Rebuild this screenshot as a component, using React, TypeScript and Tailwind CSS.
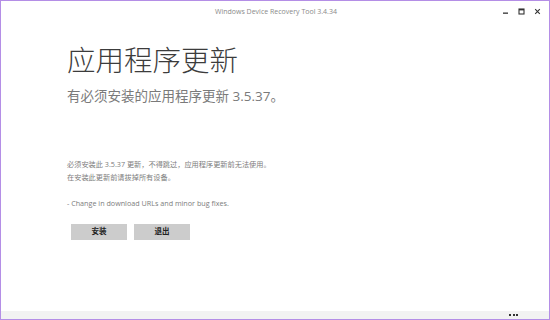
export default function App() {
  const cjk = { fontFamily: '"Open Sans", "Noto Sans CJK SC", sans-serif' };

  return (
    <div
      className="w-[550px] h-[320px] bg-white border border-[#b48ee6] flex flex-col overflow-hidden"
      style={cjk}
    >
      {/* title bar */}
      <div className="h-[22px] flex items-center relative">
        <div className="flex-1 text-center text-[7px] text-[#8a8a8a] pl-[2px]">
          Windows Device Recovery Tool 3.4.34
        </div>
        <div className="absolute right-[8px] top-[7px] flex items-center gap-[9px]">
          <svg width="7" height="7" viewBox="0 0 7 7">
            <rect x="1" y="4.5" width="5" height="1.3" fill="#333" />
          </svg>
          <svg width="7" height="7" viewBox="0 0 7 7">
            <rect x="1" y="1" width="5" height="5" fill="none" stroke="#333" strokeWidth="1.1" />
            <rect x="1" y="1" width="5" height="1.4" fill="#333" />
          </svg>
          <svg width="7" height="7" viewBox="0 0 7 7">
            <path d="M1.2 1.2 L5.8 5.8 M5.8 1.2 L1.2 5.8" stroke="#333" strokeWidth="1.1" />
          </svg>
        </div>
      </div>

      {/* content */}
      <div className="flex-1 flex flex-col pl-[66px] pt-[19px]">
        <h1 className="text-[28.5px] leading-[36px] font-light text-[#3c3c3c]">
          应用程序更新
        </h1>
        <p className="mt-[9px] text-[13.5px] leading-[18px] text-[#7a7a7a]">
          有必须安装的应用程序更新 3.5.37。
        </p>

        <div className="mt-[53px] text-[7.2px] leading-[13px] text-[#7d7d7d]">
          <p>必须安装此 3.5.37 更新，不得跳过，应用程序更新前无法使用。</p>
          <p>在安装此更新前请拔掉所有设备。</p>
        </div>

        <p className="mt-[13px] text-[7.2px] leading-[12px] text-[#7d7d7d]">
          - Change in download URLs and minor bug fixes.
        </p>

        <div className="mt-[15px] ml-[4px] flex gap-[7px]">
          <button className="w-[56px] h-[16px] bg-[#cccccc] text-[7.5px] font-bold text-[#222] flex items-center justify-center">
            安装
          </button>
          <button className="w-[56px] h-[16px] bg-[#cccccc] text-[7.5px] font-bold text-[#222] flex items-center justify-center">
            退出
          </button>
        </div>
      </div>

      {/* app bar */}
      <div className="h-[8px] bg-[#f2f2f2] flex items-center justify-end pr-[31px] gap-[1.5px]">
        <span className="w-[2px] h-[2px] bg-[#333]" />
        <span className="w-[2px] h-[2px] bg-[#333]" />
        <span className="w-[2px] h-[2px] bg-[#333]" />
      </div>
    </div>
  );
}
